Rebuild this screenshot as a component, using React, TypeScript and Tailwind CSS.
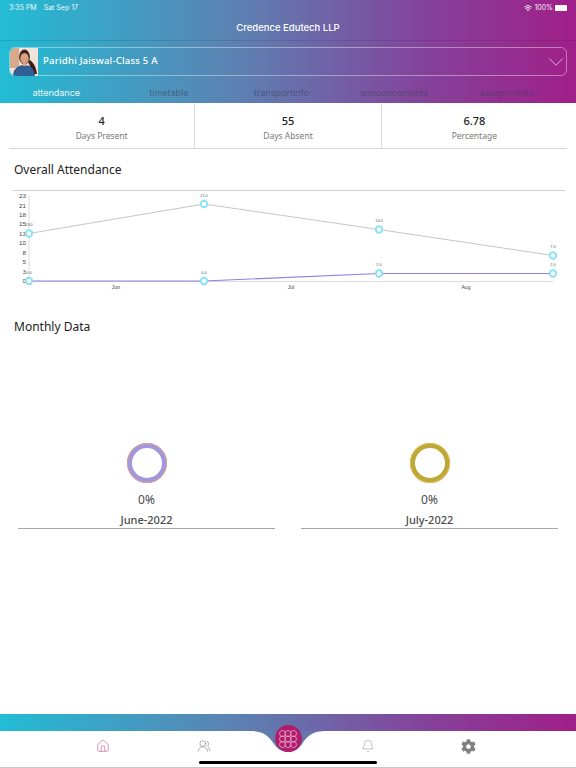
import React from 'react';
import { ChevronDown, House, UsersRound, Bell, Wifi } from 'lucide-react';
import { FaCog } from 'react-icons/fa';

const GRADIENT = 'bg-[linear-gradient(90deg,#22bcd4_0%,#5b83b3_40%,#86409a_75%,#a01f88_100%)]';
const BODY_FONT = 'font-["Noto_Sans",sans-serif]';

const TABS = [
  { label: 'attendance', active: true },
  { label: 'timetable' },
  { label: 'transportinfo' },
  { label: 'announcements' },
  { label: 'assignments' },
];

const STATS = [
  { value: '4', label: 'Days Present' },
  { value: '55', label: 'Days Absent' },
  { value: '6.78', label: 'Percentage' },
];

const MONTHS = [
  { name: 'June-2022', ring: 'border-[#a097dd]', edge: 'outline-[#e0a080]' },
  { name: 'July-2022', ring: 'border-[#bca93a]', edge: 'outline-[#e6b94a]' },
];

const POINTS_TOP = [
  { x: 29, y: 233.5, label: '13.0' },
  { x: 204, y: 204, label: '21.0' },
  { x: 379, y: 229.5, label: '14.0' },
  { x: 553, y: 255.5, label: '7.0' },
];

const POINTS_LOW = [
  { x: 29, y: 281, label: '0.0' },
  { x: 204, y: 281, label: '0.0' },
  { x: 379, y: 273.5, label: '2.0' },
  { x: 553, y: 273.5, label: '2.0' },
];

const Y_TICKS = [
  ['23', 196],
  ['21', 205.5],
  ['18', 214.5],
  ['15', 224],
  ['13', 233.5],
  ['10', 243],
  ['8', 252.5],
  ['5', 262],
  ['3', 271.5],
  ['0', 281],
] as const;

// chart coordinates are page coordinates minus the 190 top offset
const AttendanceChart = () => {
  const line = (pts: { x: number; y: number }[]) => pts.map((p) => `${p.x},${p.y - 190}`).join(' ');
  return (
    <svg width="576" height="104" viewBox="0 0 576 104" className="block">
      <line x1="12" x2="565" y1="0.5" y2="0.5" stroke="#d4d4d4" strokeWidth="1.2" />
      <line x1="29" x2="29" y1="6" y2="91" stroke="#dcdcdc" />
      <line x1="29" x2="553" y1="91.5" y2="91.5" stroke="#dcdcdc" />
      {Y_TICKS.map(([t, y]) => (
        <text key={t} x="26" y={y - 190 + 2.2} textAnchor="end" fontSize="6.2" fill="#444" fontFamily="Liberation Sans, sans-serif">
          {t}
        </text>
      ))}
      <polyline points={line(POINTS_TOP)} fill="none" stroke="#c0c0c0" strokeWidth="0.9" />
      <polyline points={line(POINTS_LOW)} fill="none" stroke="#8f80e2" strokeWidth="1.2" />
      {[...POINTS_TOP, ...POINTS_LOW].map((p, i) => (
        <g key={i}>
          <text x={p.x} y={p.y - 190 - 7.5} textAnchor="middle" fontSize="3.8" fill="#555" fontFamily="Liberation Sans, sans-serif">
            {p.label}
          </text>
          <circle cx={p.x} cy={p.y - 190} r="3.2" fill="#fff" stroke="#86e3f7" strokeWidth="1.9" />
        </g>
      ))}
      {[
        ['Jun', 116],
        ['Jul', 291],
        ['Aug', 466],
      ].map(([m, x]) => (
        <text key={m} x={x} y="99" textAnchor="middle" fontSize="5.2" fill="#444" fontFamily="Liberation Sans, sans-serif">
          {m}
        </text>
      ))}
    </svg>
  );
};

const MonthDonut = ({ name, ring, edge }: { name: string; ring: string; edge: string }) => (
  <div className="flex flex-col items-center">
    <div className={`w-[40px] h-[40px] rounded-full border-[5px] outline outline-1 -outline-offset-1 bg-white ${ring} ${edge}`} />
    <div className="mt-[8px] text-[12px] leading-[18px] text-[#4a4a4a]">0%</div>
    <div className="mt-[3px] w-full text-center text-[11px] leading-[16px] font-medium text-[#4a4a4a] border-b border-[#a8a8a8]">
      {name}
    </div>
  </div>
);

const BottomNav = () => (
  <div className="relative h-[54px]">
    <div className={`h-[17px] ${GRADIENT}`} />
    <div className="flex h-[37px] bg-white border-b border-[#c8c8c8] items-start pt-[8px] pl-[96px]">
      <House size={14} strokeWidth={1.2} className="text-[#c26a94]" />
      <UsersRound size={14} strokeWidth={1.2} className="text-[#8c8c8c] ml-[87px]" />
      <Bell size={14} strokeWidth={1} className="text-[#9a9a9a] ml-[150px]" />
      <FaCog size={15} className="text-[#808080] ml-[86px]" />
    </div>
    {/* notch and logo sit over the gradient edge */}
    <svg width="76" height="40" viewBox="0 0 76 40" className="absolute left-[250px] top-0">
      <defs>
        <linearGradient id="notch" x1="0" x2="1" y1="0" y2="0">
          <stop offset="0" stopColor="#5e80b1" />
          <stop offset="1" stopColor="#6b72ab" />
        </linearGradient>
      </defs>
      <path
        d="M0 17 C13 17 18 21 24 30 C28 36 33 38 38 38 C43 38 48 36 52 30 C58 21 63 17 76 17 Z"
        fill="url(#notch)"
      />
    </svg>
    <div className="absolute left-[274.5px] top-[11px] w-[27px] h-[27px] rounded-full bg-[#b01d6c] flex items-center justify-center">
      <svg width="18" height="18" viewBox="0 0 18 18" fill="none" stroke="#f0b8d4" strokeWidth="0.7">
        {[3.5, 9, 14.5].flatMap((y) =>
          [3.5, 9, 14.5].map((x) => <circle key={`${x}-${y}`} cx={x} cy={y} r="3" />)
        )}
      </svg>
    </div>
    <div className="absolute left-[199px] bottom-[4px] w-[178px] h-[3px] rounded-full bg-black" />
  </div>
);

export default function App() {
  return (
    <div className={`w-[576px] h-[768px] bg-white flex flex-col overflow-hidden ${BODY_FONT}`}>
      <div className={`h-[103px] text-white ${GRADIENT}`}>
        <div className='flex justify-between items-center h-[14px] px-[9px] pt-[2px] text-[7px] font-["Inter",sans-serif] text-white/90'>
          <div className="flex gap-[7px]">
            <span>3:35 PM</span>
            <span>Sat Sep 17</span>
          </div>
          <div className="flex items-center gap-[2px]">
            <Wifi size={8} strokeWidth={3} />
            <span>100%</span>
            <span className="w-[12px] h-[6px] rounded-[1px] bg-white" />
          </div>
        </div>
        <div className='h-[27px] pt-[2px] flex items-center justify-center text-[9.5px] font-medium font-["Inter",sans-serif] border-b border-black/10'>
          Credence Edutech LLP
        </div>
        <div className="mx-[9px] mt-[6px] h-[29px] flex items-center rounded-[6px] border border-white/40">
          <div className="w-[28px] h-[28px] rounded-l-[6px] overflow-hidden shrink-0">
            <svg width="28" height="28" viewBox="0 0 28 28">
              <rect width="28" height="28" fill="#f0e4d8" />
              <rect width="9" height="20" fill="#d9a98a" />
              <path d="M20 12 C24 15 26 19 27 26 L22 26 C21 21 20 17 18 14 Z" fill="#3a211c" />
              <path d="M3 28 C3 21 8 17 14 17 C20 17 24 20 25 28 Z" fill="#2f5f95" />
              <ellipse cx="14.5" cy="9" rx="5.4" ry="7.6" fill="#3a211c" />
              <ellipse cx="14.5" cy="10.5" rx="4.2" ry="5.6" fill="#d99f7e" />
              <rect x="12.8" y="14" width="3.4" height="4" fill="#d99f7e" />
            </svg>
          </div>
          <span className="ml-[5px] text-[9.6px] font-medium tracking-[0.2px]">Paridhi Jaiswal-Class 5 A</span>
          <ChevronDown size={26} strokeWidth={0.6} className="ml-auto -mr-[3px]" />
        </div>
        <div className='mt-[7px] pr-[13px] flex h-[19px] items-center text-[9px] font-["Inter",sans-serif]'>
          {TABS.map((t) => (
            <div
              key={t.label}
              className={`flex-1 text-center ${t.active ? 'text-white/90' : 'text-[#3f3f5f]/60'}`}
            >
              {t.label}
            </div>
          ))}
        </div>
      </div>

      <div className="ml-[9px] mr-[9px] flex h-[46px] border-b border-[#d6d6d6]">
        {STATS.map((s, i) => (
          <div key={s.label} className={`flex-1 flex flex-col items-center pt-[10px] ${i < 2 ? 'border-r border-[#dcdcdc]' : ''}`}>
            <div className="text-[11px] leading-[16px] font-medium text-[#222]">{s.value}</div>
            <div className="mt-[1px] text-[8.5px] leading-[12px] text-[#777]">{s.label}</div>
          </div>
        ))}
      </div>

      <div className="ml-[14px] mt-[12px] text-[12px] leading-[18px] text-[#222]">Overall Attendance</div>
      <div className="mt-[11px]">
        <AttendanceChart />
      </div>

      <div className="ml-[14px] mt-[24px] text-[12px] leading-[18px] text-[#222]">Monthly Data</div>

      <div className="mt-[107px] px-[18px] grid grid-cols-2 gap-x-[26px]">
        {MONTHS.map((m) => (
          <MonthDonut key={m.name} {...m} />
        ))}
      </div>

      <div className="flex-1" />
      <BottomNav />
    </div>
  );
}
